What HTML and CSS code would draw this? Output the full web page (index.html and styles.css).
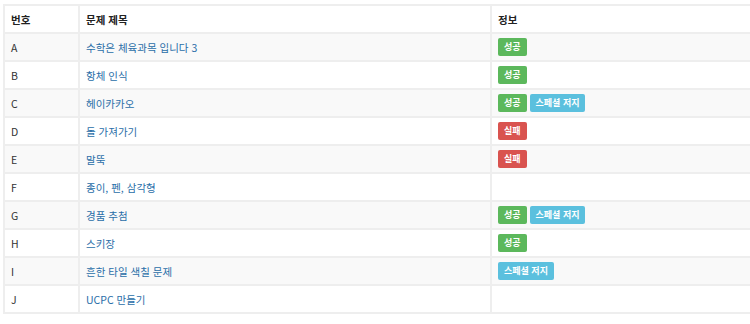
FILE: index.html
```html
<!DOCTYPE html>
<html lang="ko">
<head>
<meta charset="utf-8">
<link rel="stylesheet" href="styles.css">
</head>
<body>
<div class="wrap">
<table class="problems">
  <thead>
    <tr>
      <th class="c-num">번호</th>
      <th class="c-title">문제 제목</th>
      <th class="c-info">정보</th>
    </tr>
  </thead>
  <tbody>
    <tr><td>A</td><td><a href="#">수학은 체육과목 입니다 3</a></td><td><span class="label ok">성공</span></td></tr>
    <tr><td>B</td><td><a href="#">항체 인식</a></td><td><span class="label ok">성공</span></td></tr>
    <tr><td>C</td><td><a href="#">헤이카카오</a></td><td><span class="label ok">성공</span><span class="label sp">스페셜 저지</span></td></tr>
    <tr><td>D</td><td><a href="#">돌 가져가기</a></td><td><span class="label fail">실패</span></td></tr>
    <tr><td>E</td><td><a href="#">말뚝</a></td><td><span class="label fail">실패</span></td></tr>
    <tr><td>F</td><td><a href="#">종이, 펜, 삼각형</a></td><td></td></tr>
    <tr><td>G</td><td><a href="#">경품 추첨</a></td><td><span class="label ok">성공</span><span class="label sp">스페셜 저지</span></td></tr>
    <tr><td>H</td><td><a href="#">스키장</a></td><td><span class="label ok">성공</span></td></tr>
    <tr><td>I</td><td><a href="#">흔한 타일 색칠 문제</a></td><td><span class="label sp">스페셜 저지</span></td></tr>
    <tr><td>J</td><td><a href="#">UCPC 만들기</a></td><td></td></tr>
  </tbody>
</table>
</div>
</body>
</html>
```

FILE: styles.css
```css
html, body {
  margin: 0;
  padding: 0;
  overflow: hidden;
  background: #ffffff;
}

.wrap {
  padding: 4px 0 0 3px;
}

.problems {
  border-collapse: separate;
  border-spacing: 0;
  table-layout: fixed;
  width: 770px;
  border-top: 2px solid #eeeeee;
  border-left: 2px solid #eeeeee;
  font-family: "Noto Sans CJK KR", sans-serif;
  font-size: 10.5px;
  color: #333333;
}

.problems th,
.problems td {
  box-sizing: border-box;
  height: 28px;
  padding: 0 6px;
  border-right: 2px solid #eeeeee;
  border-bottom: 2px solid #eeeeee;
  text-align: left;
  vertical-align: middle;
  white-space: nowrap;
}

.problems thead th {
  height: 28px;
  font-weight: bold;
  color: #222222;
}

.c-num { width: 75px; }
.c-title { width: 412px; }

.problems tbody tr:nth-child(odd) td {
  background: #f9f9f9;
}

.problems a {
  color: #2a6ea8;
  text-decoration: none;
}

.label {
  display: inline-block;
  margin-right: 3px;
  padding: 0 6px;
  height: 18px;
  line-height: 18px;
  border-radius: 2px;
  font-size: 9px;
  font-weight: bold;
  color: #ffffff;
  vertical-align: middle;
}

.label.ok { background: #5cb85c; }
.label.sp { background: #5bc0de; }
.label.fail { background: #d9534f; }
```
